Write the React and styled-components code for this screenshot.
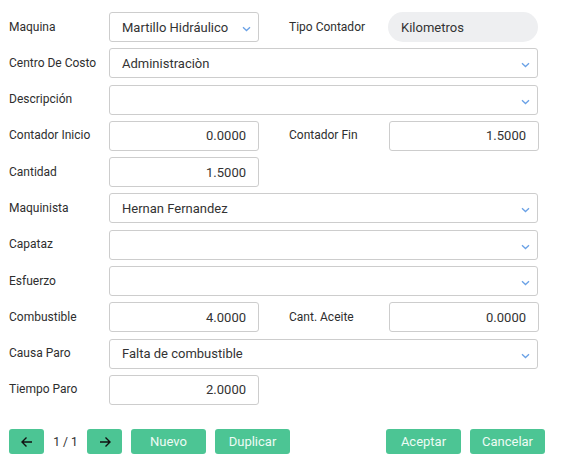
import React from "react";
import styled, { createGlobalStyle } from "styled-components";

const Global = createGlobalStyle`
  body {
    margin: 0;
    background: #fff;
    font-family: Roboto, "Liberation Sans", Arial, sans-serif;
    color: #2a2a2a;
  }
`;

const Form = styled.div`
  width: 567px;
  padding: 12px 0 0 9px;
  box-sizing: border-box;
  display: flex;
  flex-direction: column;
  gap: 6.3px;
`;

const Row = styled.div`
  display: flex;
  align-items: center;
  height: 30px;
`;

const Label = styled.div`
  width: ${(p) => p.$w || 100}px;
  font-size: 12px;
  color: #2e2e2e;
  margin-top: -1px;
  flex-shrink: 0;
`;

const Field = styled.div`
  box-sizing: border-box;
  position: relative;
  width: ${(p) => (p.$full ? 429 : 150)}px;
  height: 30px;
  border: 1px solid #cdcdcd;
  border-radius: 3px;
  background: #fff;
  display: flex;
  align-items: center;
  justify-content: ${(p) => (p.$num ? "flex-end" : "flex-start")};
  padding: ${(p) => (p.$num ? "0 12px 0 0" : "0 18px 0 12px")};
  font-size: 13px;
  color: #333;
  white-space: nowrap;
`;

const Pill = styled.div`
  box-sizing: border-box;
  width: 150px;
  height: 30px;
  border-radius: 15px;
  background: #eeeff1;
  display: flex;
  align-items: center;
  padding-left: 13px;
  font-size: 13px;
  color: #333;
  margin-left: -1px;
`;

const Chevron = styled.svg`
  position: absolute;
  right: 7px;
  top: 50%;
  margin-top: -1px;
  width: 9px;
  height: 6px;
`;

const Spacer = styled.div`
  width: 30px;
  flex-shrink: 0;
`;

const Footer = styled.div`
  display: flex;
  align-items: center;
  height: 25px;
  margin-top: 18px;
  width: 536px;
`;

const Btn = styled.button`
  height: 25px;
  width: ${(p) => p.$w || 75}px;
  border: none;
  border-radius: 3px;
  background: #4cc594;
  color: #eefbf4;
  font-family: inherit;
  font-size: 13px;
  padding: 0;
  margin-right: ${(p) => p.$mr || 0}px;
  display: flex;
  align-items: center;
  justify-content: center;
`;

const Pager = styled.span`
  font-size: 12px;
  color: #2e2e2e;
  width: 43px;
  text-align: center;
`;

const Grow = styled.div`
  flex: 1;
`;

const Down = () => (
  <Chevron viewBox="0 0 9 6">
    <path d="M1 1.2 L4.5 4.5 L8 1.2" fill="none" stroke="#6aa1e6" strokeWidth="1.3" />
  </Chevron>
);

const Select = ({ value, full }) => (
  <Field $full={full}>
    {value}
    <Down />
  </Field>
);

const Arrow = ({ left }) => (
  <svg width="14" height="14" viewBox="0 0 14 14">
    <path
      d={left ? "M12 7 H2 M6.5 2.5 L2 7 L6.5 11.5" : "M2 7 H12 M7.5 2.5 L12 7 L7.5 11.5"}
      fill="none"
      stroke="#111"
      strokeWidth="1.4"
    />
  </svg>
);

export default function App() {
  return (
    <>
      <Global />
      <Form>
        <Row>
          <Label>Maquina</Label>
          <Select value="Martillo Hidráulico" />
          <Spacer />
          <Label>Tipo Contador</Label>
          <Pill>Kilometros</Pill>
        </Row>
        <Row>
          <Label>Centro De Costo</Label>
          <Select full value="Administraciòn" />
        </Row>
        <Row>
          <Label>Descripción</Label>
          <Select full />
        </Row>
        <Row>
          <Label>Contador Inicio</Label>
          <Field $num>0.0000</Field>
          <Spacer />
          <Label>Contador Fin</Label>
          <Field $num>1.5000</Field>
        </Row>
        <Row>
          <Label>Cantidad</Label>
          <Field $num>1.5000</Field>
        </Row>
        <Row>
          <Label>Maquinista</Label>
          <Select full value="Hernan Fernandez" />
        </Row>
        <Row>
          <Label>Capataz</Label>
          <Select full />
        </Row>
        <Row>
          <Label>Esfuerzo</Label>
          <Select full />
        </Row>
        <Row>
          <Label>Combustible</Label>
          <Field $num>4.0000</Field>
          <Spacer />
          <Label>Cant. Aceite</Label>
          <Field $num>0.0000</Field>
        </Row>
        <Row>
          <Label>Causa Paro</Label>
          <Select full value="Falta de combustible" />
        </Row>
        <Row>
          <Label>Tiempo Paro</Label>
          <Field $num>2.0000</Field>
        </Row>
        <Footer>
          <Btn $w={35}>
            <Arrow left />
          </Btn>
          <Pager>1 / 1</Pager>
          <Btn $w={35} $mr={9}>
            <Arrow />
          </Btn>
          <Btn $mr={9}>Nuevo</Btn>
          <Btn>Duplicar</Btn>
          <Grow />
          <Btn $mr={9}>Aceptar</Btn>
          <Btn>Cancelar</Btn>
        </Footer>
      </Form>
    </>
  );
}
